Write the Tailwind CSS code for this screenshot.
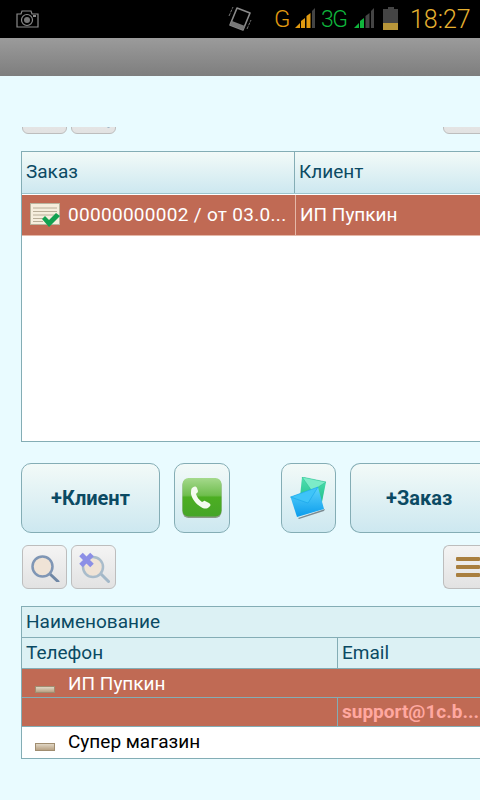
<!DOCTYPE html>
<html lang="en">
<head>
    <meta charset="UTF-8">
    <meta name="viewport" content="width=device-width, initial-scale=1.0">
    <title>Заказы</title>
    <script src="https://cdn.jsdelivr.net/npm/@tailwindcss/browser@4"></script>
</head>
<body class="bg-[#e9fbff]">
<div class="w-[480px] h-[800px] overflow-hidden flex flex-col font-['Roboto',sans-serif]">

    <!-- Status bar -->
    <div class="h-[38px] shrink-0 bg-black flex items-center">
        <svg class="ml-[16px] mb-[1px] shrink-0" width="23" height="20" viewBox="0 0 23 20" fill="none" stroke="#8a8a8a" stroke-width="1.2">
            <path d="M1 5h4l1-3h9l1 3h6v13H1z"/>
            <circle cx="11" cy="11" r="5.5"/>
            <circle cx="11" cy="11" r="3" fill="#777" stroke="none"/>
            <rect x="17" y="6" width="3" height="2" fill="#8a8a8a" stroke="none"/>
        </svg>
        <svg class="ml-[189px] mb-[2px] shrink-0" width="24" height="26" viewBox="0 0 24 26" fill="none">
            <path d="M9 3l13 5-7 17-13-5z" stroke="#8a8a8a" stroke-width="1.6" stroke-linejoin="round"/>
            <path d="M4 16l13 5-2 4-13-5z" fill="#777"/>
            <path d="M1 11l4-9M19 24l4-9" stroke="#777" stroke-width="1" stroke-dasharray="3 1"/>
        </svg>
        <span class="ml-[22px] w-[21px] shrink-0 text-[24px] leading-none font-light text-[#e09a10]">G</span>
        <svg class="shrink-0" width="21" height="22" viewBox="0 0 21 22">
            <path d="M0 20l5-5v5z" fill="#e09a10"/>
            <path d="M6 20v-7l4-3v10z" fill="#e09a10"/>
            <path d="M11.500 20V8l4-3v15z" fill="#e09a10"/>
            <path d="M17 20V3l3-3v20z" fill="#444"/>
        </svg>
        <span class="ml-[5px] w-[33px] shrink-0 text-[23px] leading-none font-light tracking-[-1.5px] text-[#0fb53c]">3G</span>
        <svg class="shrink-0" width="21" height="22" viewBox="0 0 21 22">
            <path d="M0 20l5-5v5z" fill="#10b53c"/>
            <path d="M6 20v-7l4-3v10z" fill="#10b53c"/>
            <path d="M11.500 20V8l4-3v15z" fill="#444"/>
            <path d="M17 20V3l3-3v20z" fill="#444"/>
        </svg>
        <svg class="ml-[8px] mb-[2px] shrink-0" width="16" height="23" viewBox="0 0 16 23">
            <path d="M5 0h6v2h4v21H0V2h5z" fill="#444"/>
            <rect y="16" width="15" height="7" fill="#b8963a"/>
        </svg>
        <span class="ml-[11px] text-[25px] leading-none font-light text-[#e5b030]">18:27</span>
    </div>

    <!-- Title bar -->
    <div class="h-[38px] shrink-0 bg-linear-to-b from-[#9b9b9b] to-[#7e7e7e]"></div>

    <!-- Toolbar scrolled mostly out of view -->
    <div class="mt-[51px] h-[7px] shrink-0 overflow-hidden flex items-end pl-[22px] gap-[4px]">
        <div class="w-[45px] h-[44px] shrink-0 rounded-[6px] border border-[#bdbdbd] bg-linear-to-b from-[#f4f4f4] to-[#e2e2e2] flex items-center justify-center">
            <svg width="30" height="30" viewBox="0 0 30 30">
                <path d="M20 22l8 7.500" stroke="#6f87a5" stroke-width="3" stroke-linecap="round"/>
            </svg>
        </div>
        <div class="w-[45px] h-[44px] shrink-0 rounded-[6px] border border-[#bdbdbd] bg-linear-to-b from-[#f4f4f4] to-[#e2e2e2] flex items-center justify-center">
            <svg width="32" height="32" viewBox="0 0 32 32">
                <path d="M23 23l7.500 7.500" stroke="#a3b8c8" stroke-width="3" stroke-linecap="round"/>
            </svg>
        </div>
        <div class="ml-[323px] w-[45px] h-[44px] shrink-0 rounded-[6px] border border-[#bdbdbd] bg-linear-to-b from-[#f4f4f4] to-[#e2e2e2]"></div>
    </div>

    <!-- Orders table -->
    <div class="mt-[17px] ml-[21px] h-[291px] shrink-0 border-l border-t border-b border-[#84adb5] bg-white flex flex-col">
        <div class="h-[42px] shrink-0 flex bg-linear-to-b from-[#f2faf8] to-[#cde8f0] border-b border-[#9cc3cc] text-[19px] text-[#0b4a63]">
            <div class="w-[273px] pl-[4px] pb-[1px] flex items-center border-r border-[#84adb5]">Заказ</div>
            <div class="pl-[4px] pb-[1px] flex items-center">Клиент</div>
        </div>
        <div class="mt-[1px] h-[41px] shrink-0 flex bg-[#c06a54] border-b border-[#e5b8a8] text-[19px] text-white">
            <div class="w-[274px] pl-[8px] flex items-center border-r border-[#e5b8a8] whitespace-nowrap tracking-[0.3px]">
                <svg class="mr-[8px] shrink-0" width="30" height="25" viewBox="0 0 30 25">
                    <rect x="0.500" y="0.500" width="29" height="21" fill="#f5eedd" stroke="#b9b59f"/>
                    <path d="M3 5h24M3 8.500h24M3 12h24M3 15.500h14M3 18.500h10" stroke="#b8ae98"/>
                    <path d="M12 16l3-3 4 4 7-7 4 3-11 11z" fill="#12a150"/>
                </svg>
                00000000002 / от 03.0...
            </div>
            <div class="pl-[4px] flex items-center">ИП Пупкин</div>
        </div>
    </div>

    <!-- Action buttons -->
    <div class="mt-[21px] ml-[21px] h-[70px] shrink-0 flex text-[20px] font-bold text-[#0b4a63]">
        <div class="w-[139px] rounded-[10px] border border-[#84adb5] bg-linear-to-b from-[#f2faf8] to-[#cde8f0] flex items-center justify-center">+Клиент</div>
        <div class="ml-[14px] w-[56px] rounded-[10px] border border-[#84adb5] bg-linear-to-b from-[#f2faf8] to-[#cde8f0] flex items-center justify-center">
            <svg width="40" height="41" viewBox="0 0 40 41">
                <defs>
                    <linearGradient id="phoneBg" x1="0" y1="0" x2="0" y2="1">
                        <stop offset="0" stop-color="#a5d98c"/>
                        <stop offset="0.45" stop-color="#6fbe4e"/>
                        <stop offset="0.5" stop-color="#4cae22"/>
                        <stop offset="1" stop-color="#45a528"/>
                    </linearGradient>
                </defs>
                <rect x="0.500" y="1" width="39" height="39" rx="6" fill="#8a9a86"/>
                <rect x="0.500" y="0" width="39" height="38.500" rx="6" fill="url(#phoneBg)"/>
                <path d="M10 10c2-2 4-2 5 0l1 3c0 2-2 2-2 3 1 3 3 6 6 8 1 0 2-2 3-1l4 2c2 1 2 3 0 4-2 2-5 2-8 0-5-3-9-8-10-13 0-3 0-5 1-6z" fill="#f4fbef"/>
            </svg>
        </div>
        <div class="ml-[51px] w-[55px] rounded-[10px] border border-[#84adb5] bg-linear-to-b from-[#f2faf8] to-[#cde8f0] flex items-center justify-center">
            <svg width="38" height="42" viewBox="0 0 38 42">
                <defs>
                    <linearGradient id="mailBlue" x1="0" y1="0" x2="0" y2="1">
                        <stop offset="0" stop-color="#5fd4fb"/>
                        <stop offset="1" stop-color="#0a9cec"/>
                    </linearGradient>
                    <linearGradient id="mailGreen" x1="0" y1="0" x2="0" y2="1">
                        <stop offset="0" stop-color="#4fe0b0"/>
                        <stop offset="1" stop-color="#18b884"/>
                    </linearGradient>
                </defs>
                <path d="M12 0l24 5-5 25-21-10z" fill="url(#mailGreen)"/>
                <path d="M12 0l24 5-14 9z" fill="#7cecc8" stroke="#2bbd8e" stroke-width="0.5"/>
                <path d="M8 41l27-9-1 2-25 8z" fill="#7b8a90"/>
                <path d="M0.500 20L28 10l6 22-27 8z" fill="url(#mailBlue)"/>
                <path d="M0.500 20L28 10l-10 16z" fill="#3fc4f8" stroke="#0e9ee6" stroke-width="0.5"/>
            </svg>
        </div>
        <div class="ml-[14px] flex-1 rounded-l-[10px] border-l border-t border-b border-[#84adb5] bg-linear-to-b from-[#f2faf8] to-[#cde8f0] flex items-center pl-[35px]">+Заказ</div>
    </div>

    <!-- Search toolbar -->
    <div class="mt-[12px] ml-[22px] h-[44px] shrink-0 flex">
        <div class="w-[45px] rounded-[6px] border border-[#bdbdbd] bg-linear-to-b from-[#f4f4f4] to-[#e2e2e2] flex items-center justify-center">
            <svg width="30" height="30" viewBox="0 0 30 30">
                <path d="M20 22l8 7.500" stroke="#6f87a5" stroke-width="3" stroke-linecap="round"/>
                <circle cx="12.500" cy="14.500" r="10" fill="#efe3d6" stroke="#7f96b5" stroke-width="2.500"/>
            </svg>
        </div>
        <div class="ml-[4px] w-[45px] rounded-[6px] border border-[#bdbdbd] bg-linear-to-b from-[#f4f4f4] to-[#e2e2e2] flex items-center justify-center">
            <svg width="32" height="32" viewBox="0 0 32 32">
                <path d="M23 23l7.500 7.500" stroke="#a3b8c8" stroke-width="3" stroke-linecap="round"/>
                <circle cx="15" cy="16" r="10" fill="#efe3d6" stroke="#a9bccb" stroke-width="2.500"/>
                <path d="M3 3.500l11 11M14 3.500l-11 11" stroke="#8c8fe6" stroke-width="5"/>
            </svg>
        </div>
        <div class="ml-[327px] flex-1 rounded-l-[6px] border-l border-t border-b border-[#bdbdbd] bg-linear-to-b from-[#f4f4f4] to-[#e2e2e2] flex flex-col justify-center gap-[4px] pl-[12px]">
            <div class="h-[4px] bg-[#a97f3f] rounded-[1px]"></div>
            <div class="h-[4px] bg-[#a97f3f] rounded-[1px]"></div>
            <div class="h-[4px] bg-[#a97f3f] rounded-[1px]"></div>
        </div>
    </div>

    <!-- Clients table -->
    <div class="mt-[17px] ml-[21px] shrink-0 border-l border-t border-b border-[#84adb5] text-[19px]">
        <div class="h-[31px] bg-[#dcf1f4] border-b border-[#84adb5] pl-[4px] flex items-center text-[#0b4a63]">Наименование</div>
        <div class="h-[31px] bg-[#dcf1f4] border-b border-[#84adb5] flex text-[#0b4a63]">
            <div class="w-[316px] pl-[4px] flex items-center border-r border-[#84adb5]">Телефон</div>
            <div class="pl-[4px] flex items-center">Email</div>
        </div>
        <div class="h-[29px] bg-[#c06a54] border-b border-[#84adb5] flex items-center text-white">
            <div class="ml-[13px] mt-[12px] w-[20px] h-[7px] border border-[#a08d70] bg-linear-to-b from-[#e0d6c4] to-[#b8a284]"></div>
            <span class="ml-[13px] mt-[2px]">ИП Пупкин</span>
        </div>
        <div class="h-[29px] bg-[#c06a54] border-b border-[#84adb5] flex">
            <div class="w-[316px] border-r border-[#84adb5]"></div>
            <div class="pl-[4px] flex items-center font-bold whitespace-nowrap text-[#ffa8a0]">support@1c.b...</div>
        </div>
        <div class="h-[31px] bg-white flex items-center text-black">
            <div class="ml-[13px] mt-[9px] w-[20px] h-[8px] border border-[#a08d70] bg-linear-to-b from-[#e0d6c4] to-[#b8a284]"></div>
            <span class="ml-[13px]">Супер магазин</span>
        </div>
    </div>
</div>
</body>
</html>
